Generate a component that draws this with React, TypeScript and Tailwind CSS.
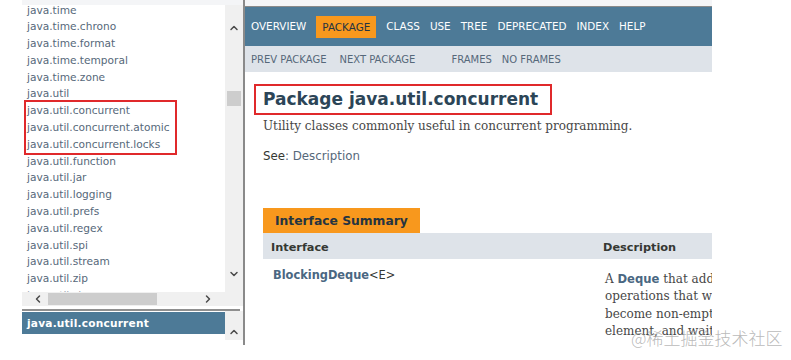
import React from 'react'
import { ChevronUp, ChevronDown, ChevronLeft, ChevronRight } from 'lucide-react'

const packages = [
  'java.time',
  'java.time.chrono',
  'java.time.format',
  'java.time.temporal',
  'java.time.zone',
  'java.util',
]

const marked = ['java.util.concurrent', 'java.util.concurrent.atomic', 'java.util.concurrent.locks']

const rest = [
  'java.util.function',
  'java.util.jar',
  'java.util.logging',
  'java.util.prefs',
  'java.util.regex',
  'java.util.spi',
  'java.util.stream',
  'java.util.zip',
]

const navItems = ['OVERVIEW', 'PACKAGE', 'CLASS', 'USE', 'TREE', 'DEPRECATED', 'INDEX', 'HELP']

const sans = "font-['DejaVu_Sans',sans-serif]"
const serif = "font-['DejaVu_Serif',serif]"

function PackageItem({ name }: { name: string }) {
  return <div className="h-[16.8px] leading-[16.8px] whitespace-nowrap">{name}</div>
}

export default function App() {
  return (
    <div className={`w-[791px] h-[360px] bg-white flex relative overflow-hidden ${sans}`}>
      <div className="w-[22px] flex-shrink-0" />

      {/* Left frames: package list + current package */}
      <div className="w-[221px] flex-shrink-0 flex flex-col">
        <div className="h-[5px] bg-[#f4f5f7]" />
        <div className="flex h-[287px]">
          <div className="w-[203px] overflow-hidden pl-[5px] text-[10.6px] text-[#56687a]">
            <div className="-mt-[3.5px]">
              {packages.map((p) => <PackageItem key={p} name={p} />)}
              <div className="-ml-[3px] w-[153px] border-2 border-[#e0292b] pl-[1px] -my-[2px]">
                {marked.map((p) => <PackageItem key={p} name={p} />)}
              </div>
              {rest.map((p) => <PackageItem key={p} name={p} />)}
              <div className="h-[8px] overflow-hidden leading-[16.8px] text-[#9aa5b0]">java.util.zip</div>
            </div>
          </div>
          <div className="w-[18px] bg-[#f0f0f0] flex flex-col items-center">
            <ChevronUp className="mt-[17px] w-[12px] h-[12px] text-[#4a4a4a]" strokeWidth={3} />
            <div className="mt-[57px] w-[14px] h-[15px] bg-[#cdcdcd]" />
            <div className="flex-1" />
            <ChevronDown className="mb-[12px] w-[12px] h-[12px] text-[#4a4a4a]" strokeWidth={3} />
          </div>
        </div>
        <div className="h-[14px] flex">
          <div className="w-[203px] bg-[#f0f0f0] flex items-center">
            <ChevronLeft className="ml-[10px] w-[12px] h-[12px] text-[#4a4a4a]" strokeWidth={3} />
            <div className="ml-[4px] w-[109px] h-[12px] bg-[#cdcdcd]" />
            <div className="flex-1" />
            <ChevronRight className="mr-[11px] w-[12px] h-[12px] text-[#4a4a4a]" strokeWidth={3} />
          </div>
          <div className="flex-1 bg-[#f0f0f0]" />
        </div>
        <div className="h-[3px]" />
        <div className="h-[2px] bg-[#8f8f8f] mr-[3px]" />
        <div className="flex">
          <div className="w-[203px] h-[22px] mt-[1px] bg-[#4d7a97] pl-[5px] text-[10.6px] font-bold text-white leading-[22px] tracking-[0.2px]">
            java.util.concurrent
          </div>
          <div className="w-[18px] h-[29px] bg-[#f0f0f0] flex justify-center">
            <ChevronUp className="mt-[15px] w-[12px] h-[12px] text-[#4a4a4a]" strokeWidth={3} />
          </div>
        </div>
      </div>

      <div className="w-[2px] h-[345px] bg-[#8a8a8a] flex-shrink-0" />

      {/* Right frame: package summary */}
      <div className="w-[467px] flex-shrink-0 flex flex-col overflow-hidden">
        <div className="h-[6px] bg-[#f4f5f7]" />
        <div className="h-[1px] bg-[#8a8a8a]" />
        <div className="h-[39px] bg-[#4d7a97] flex items-center pl-[6px] text-[10.4px] text-white">
          {navItems.map((item) =>
            item === 'PACKAGE' ? (
              <span key={item} className="mr-[10px] h-[22px] leading-[22px] px-[6px] bg-[#f8981d] text-[#253441]">
                {item}
              </span>
            ) : (
              <span key={item} className="mr-[10px] whitespace-nowrap">{item}</span>
            )
          )}
        </div>
        <div className="h-[26px] bg-[#dee3e9] flex items-center pl-[6px] text-[10px] text-[#56687a] whitespace-nowrap">
          <span>PREV PACKAGE</span>
          <span className="ml-[13px]">NEXT PACKAGE</span>
          <span className="ml-[36px]">FRAMES</span>
          <span className="ml-[10px]">NO FRAMES</span>
        </div>

        <div className="pl-[9px]">
          <div className="mt-[12px] inline-block border-2 border-[#e0292b] h-[31px] pl-[7px] pr-[12px] text-[17px] font-bold text-[#2c4557] leading-[27px] whitespace-nowrap">
            Package java.util.concurrent
          </div>
        </div>

        <div className="pl-[18px]">
          <div className={`mt-[3px] text-[12px] leading-[16px] text-[#474747] whitespace-nowrap ${serif}`}>
            Utility classes commonly useful in concurrent programming.
          </div>
          <div className="mt-[14px] text-[11.8px] leading-[16px] whitespace-nowrap">
            <span className="text-[#353833]">See</span>
            <span className="text-[#56687a]">: Description</span>
          </div>

          <div className="mt-[44px] w-[157px] h-[25px] bg-[#f8981d] pl-[12px] text-[12.3px] font-bold text-[#253441] leading-[26px] whitespace-nowrap">
            Interface Summary
          </div>
          <div className="h-[26px] pt-[4px] bg-[#dee3e9] flex items-center text-[11.3px] font-bold text-[#353833] whitespace-nowrap">
            <span className="ml-[8px] w-[332px] flex-shrink-0">Interface</span>
            <span>Description</span>
          </div>
          <div className="flex pt-[8px] whitespace-nowrap">
            <div className="ml-[10px] w-[332px] flex-shrink-0 text-[11.4px] leading-[16px]">
              <span className="font-bold text-[#4a6782]">BlockingDeque</span>
              <span className="text-[#353833]">&lt;E&gt;</span>
            </div>
            <div className={`pt-[4px] text-[12px] leading-[17.4px] text-[#474747] ${serif}`}>
              <div>
                A <span className={`font-bold text-[#4a6782] ${sans} text-[11.6px]`}>Deque</span> that additionally supports blocking
              </div>
              <div>operations that wait for the deque to</div>
              <div>become non-empty when retrieving an</div>
              <div>element, and wait for space to become</div>
            </div>
          </div>
        </div>
      </div>

      {/* Site watermark */}
      <div className="absolute left-[631px] top-[327px] text-[17px] leading-[22px] text-[#a8a8a8]/80 whitespace-nowrap font-['Noto_Sans_CJK_SC',sans-serif] font-light">
        @稀土掘金技术社区
      </div>
    </div>
  )
}
